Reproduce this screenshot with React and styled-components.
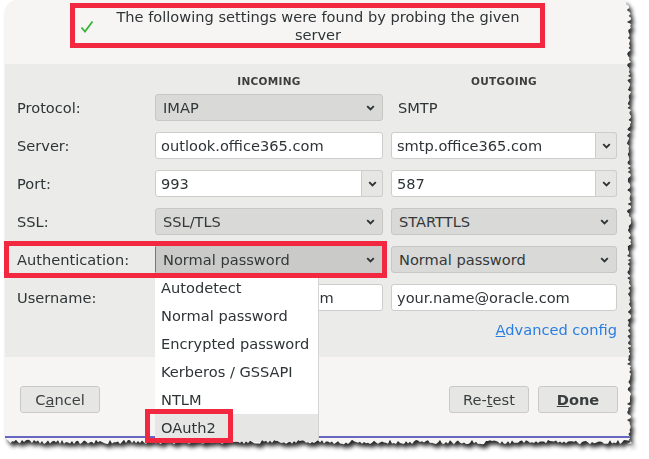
import React from "react";
import styled, { createGlobalStyle, css } from "styled-components";

const GlobalStyle = createGlobalStyle`
  html, body {
    margin: 0;
    padding: 0;
    background: #ffffff;
  }
  body {
    font-family: "DejaVu Sans", "Liberation Sans", sans-serif;
    font-size: 14.6px;
    color: #2e3436;
  }
`;

// torn paper edge, right and bottom side
const W = 627;
const H = 445;
const rnd = (i) => {
  const v = Math.sin(i * 12.9898 + 78.233) * 43758.5453;
  return v - Math.floor(v);
};
const tornEdge = (() => {
  const pts = ["0px 0px"];
  for (let y = 0; y <= H; y += 2) {
    const x = W - 3 + (rnd(y) - 0.5) * 4.5 - (y < 8 ? (8 - y) * 0.5 : 0);
    pts.push(`${x.toFixed(1)}px ${y}px`);
  }
  for (let x = W; x >= 0; x -= 2) {
    const y = H - 3 + (rnd(x + 999) - 0.5) * 4.5;
    pts.push(`${x}px ${y.toFixed(1)}px`);
  }
  pts.push(`0px ${H - 3}px`);
  return `polygon(${pts.join(", ")})`;
})();

const Stage = styled.div`
  position: relative;
  width: 649px;
  height: 459px;
  overflow: hidden;
`;

const ShadowWrap = styled.div`
  margin-left: 5px;
  width: ${W}px;
  filter: drop-shadow(3px 4px 2px rgba(0, 0, 0, 0.85));
`;

const Dialog = styled.div`
  position: relative;
  height: ${H}px;
  background: #f6f5f4;
  border-radius: 12px 10px 0 12px;
  clip-path: ${tornEdge};
  display: flex;
  flex-direction: column;
`;

const Header = styled.div`
  height: 64px;
  padding-top: 3px;
  box-sizing: border-box;
`;

const Notice = styled.div`
  margin-left: 65px;
  width: 475px;
  height: 45px;
  box-sizing: border-box;
  border: 5px solid #f1283f;
  display: flex;
  align-items: center;
`;

const Check = styled.svg`
  width: 14px;
  height: 14px;
  margin-left: 5px;
  margin-top: 3px;
  flex: none;
`;

const NoticeText = styled.div`
  flex: 1;
  text-align: center;
  line-height: 18px;
  padding-left: 2px;
`;

const Form = styled.div`
  background: #ebebe9;
  padding: 9px 0 0 12px;
  height: 293px;
  box-sizing: border-box;
`;

const Grid = styled.div`
  display: grid;
  grid-template-columns: 130px 228px 226px;
  column-gap: 8px;
  row-gap: 11px;
  grid-auto-rows: 27px;
`;

const HeadGrid = styled(Grid)`
  grid-auto-rows: 16px;
  margin-bottom: 5px;
`;

const ColHead = styled.div`
  font-size: 10.5px;
  font-weight: bold;
  color: #3d3d3d;
  text-align: center;
  line-height: 16px;
  letter-spacing: 0.3px;
`;

const Label = styled.div`
  display: flex;
  align-items: center;
`;

const Plain = styled.div`
  display: flex;
  align-items: center;
  padding-left: 7px;
`;

const SelectBox = styled.div`
  display: flex;
  align-items: center;
  justify-content: space-between;
  box-sizing: border-box;
  height: 27px;
  padding: 0 7px 0 7px;
  background: #d9d9d8;
  border: 1px solid #c7c7c5;
  border-radius: 3px;
  color: #343839;
  ${(p) =>
    p.$active &&
    css`
      background: #cacac9;
      border-left-color: #3584e4;
      border-radius: 0 3px 3px 0;
    `}
`;

const Field = styled.div`
  display: flex;
  height: 27px;
`;

const TextBox = styled.div`
  flex: 1;
  box-sizing: border-box;
  display: flex;
  align-items: center;
  padding-left: 5px;
  background: #ffffff;
  border: 1px solid #cdcdcb;
  border-radius: ${(p) => (p.$combo ? "3px 0 0 3px" : "3px")};
  white-space: nowrap;
  overflow: hidden;
`;

const DropButton = styled.div`
  width: 21px;
  flex: none;
  box-sizing: border-box;
  display: flex;
  align-items: center;
  justify-content: center;
  background: #e6e6e5;
  border: 1px solid #cdcdcb;
  border-left: none;
  border-radius: 0 3px 3px 0;
`;

const LinkRow = styled.div`
  display: flex;
  justify-content: flex-end;
  width: 600px;
  margin-top: 11px;
  line-height: 16px;
`;

const Link = styled.a`
  color: #2a7de1;
  text-decoration: none;
  u {
    text-decoration: underline;
  }
`;

const Footer = styled.div`
  display: flex;
  align-items: flex-start;
  padding: 29px 14px 0 15px;
  height: 81px;
  box-sizing: border-box;
  border-bottom: 2px solid #6767c2;
  gap: 9px;
`;

const Button = styled.div`
  width: 80px;
  height: 27px;
  box-sizing: border-box;
  display: flex;
  align-items: center;
  justify-content: center;
  background: #e6e6e5;
  border: 1px solid #c9c9c7;
  border-radius: 3px;
  color: #3a3e3f;
  font-weight: ${(p) => (p.$primary ? "bold" : "normal")};
  u {
    text-decoration: underline;
  }
`;

const Spacer = styled.div`
  flex: 1;
`;

const Popup = styled.div`
  position: absolute;
  left: 150px;
  top: 274px;
  width: 163px;
  background: #ffffff;
  border-right: 1px solid #d4d4d2;
`;

const Item = styled.div`
  height: 28px;
  line-height: 28px;
  padding-left: 6px;
  white-space: nowrap;
  color: #2e3436;
  background: ${(p) => (p.$hover ? "#e6e6e5" : "transparent")};
`;

const Callout = styled.div`
  position: absolute;
  box-sizing: border-box;
  border: 5px solid #f1283f;
  pointer-events: none;
`;

const Chevron = () => (
  <svg width="9" height="6" viewBox="0 0 9 6">
    <path d="M1.2 1.2 L4.5 4.5 L7.8 1.2" fill="none" stroke="#2e3436" strokeWidth="1.9" />
  </svg>
);

const Select = ({ children, active }) => (
  <SelectBox $active={active}>
    <span>{children}</span>
    <Chevron />
  </SelectBox>
);

const Combo = ({ children }) => (
  <Field>
    <TextBox $combo>{children}</TextBox>
    <DropButton>
      <Chevron />
    </DropButton>
  </Field>
);

const Input = ({ children }) => (
  <Field>
    <TextBox>{children}</TextBox>
  </Field>
);

const authOptions = [
  "Autodetect",
  "Normal password",
  "Encrypted password",
  "Kerberos / GSSAPI",
  "NTLM",
  "OAuth2",
];

export default function App() {
  return (
    <>
      <GlobalStyle />
      <Stage>
        <ShadowWrap>
          <Dialog>
            <Header>
              <Notice>
                <Check viewBox="0 0 14 14">
                  <path d="M1.5 7.5 L5 11.5 L12.5 1.5" fill="none" stroke="#36b336" strokeWidth="1.8" />
                </Check>
                <NoticeText>
                  The following settings were found by probing the given
                  <br />
                  server
                </NoticeText>
              </Notice>
            </Header>

            <Form>
              <HeadGrid>
                <div />
                <ColHead>INCOMING</ColHead>
                <ColHead>OUTGOING</ColHead>
              </HeadGrid>
              <Grid>
                <Label>Protocol:</Label>
                <Select>IMAP</Select>
                <Plain>SMTP</Plain>

                <Label>Server:</Label>
                <Input>outlook.office365.com</Input>
                <Combo>smtp.office365.com</Combo>

                <Label>Port:</Label>
                <Combo>993</Combo>
                <Combo>587</Combo>

                <Label>SSL:</Label>
                <Select>SSL/TLS</Select>
                <Select>STARTTLS</Select>

                <Label>Authentication:</Label>
                <Select active>Normal password</Select>
                <Select>Normal password</Select>

                <Label>Username:</Label>
                <Input>your.name@oracle.com</Input>
                <Input>your.name@oracle.com</Input>
              </Grid>
              <LinkRow>
                <Link>
                  <u>A</u>dvanced config
                </Link>
              </LinkRow>
            </Form>

            <Footer>
              <Button>
                C<u>a</u>ncel
              </Button>
              <Spacer />
              <Button>
                Re-<u>t</u>est
              </Button>
              <Button $primary>
                <u>D</u>one
              </Button>
            </Footer>

            <Popup>
              {authOptions.map((o) => (
                <Item key={o} $hover={o === "OAuth2"}>
                  {o}
                </Item>
              ))}
            </Popup>
          </Dialog>
        </ShadowWrap>
        <Callout style={{ left: 4, top: 241, width: 383, height: 37 }} />
        <Callout style={{ left: 145, top: 409, width: 88, height: 34 }} />
      </Stage>
    </>
  );
}
